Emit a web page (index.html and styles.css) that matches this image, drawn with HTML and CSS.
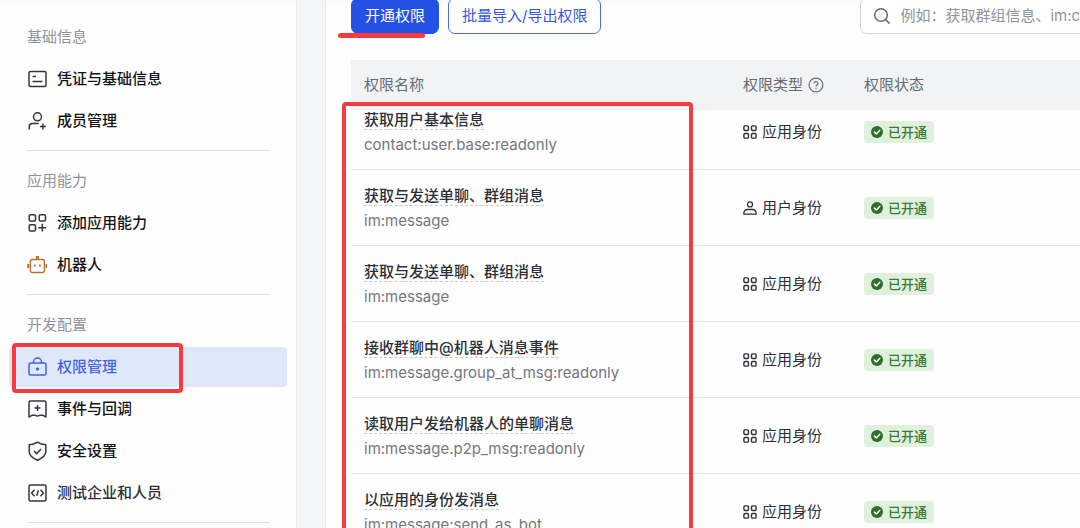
FILE: index.html
```html
<!DOCTYPE html>
<html lang="zh-CN">
<head>
<meta charset="utf-8">
<meta name="viewport" content="width=device-width, initial-scale=1">
<title>权限管理</title>
<link rel="stylesheet" href="styles.css">
</head>
<body>
<svg class="sprite" aria-hidden="true">
  <symbol id="i-grid" viewBox="0 0 14 14"><g fill="none" stroke="currentColor" stroke-width="1.4"><rect x=".9" y=".9" width="4.6" height="4.6" rx="1.2"/><rect x="8.5" y=".9" width="4.6" height="4.6" rx="1.2"/><rect x=".9" y="8.5" width="4.6" height="4.6" rx="1.2"/><rect x="8.5" y="8.5" width="4.6" height="4.6" rx="1.2"/></g></symbol>
  <symbol id="i-user" viewBox="0 0 14 14"><g fill="none" stroke="currentColor" stroke-width="1.3"><circle cx="7" cy="3.4" r="2.5"/><path d="M.9 13.2v-1.400a3.300 3.300 0 0 1 3.300-3.300h5.600a3.300 3.300 0 0 1 3.300 3.300v1.400z" stroke-linejoin="round"/></g></symbol>
  <symbol id="i-ok" viewBox="0 0 12 12"><circle cx="6" cy="6" r="6" fill="currentColor"/><path d="M3.4 6.1l1.9 1.8 3.4-3.5" fill="none" stroke="#fff" stroke-width="1.5" stroke-linecap="round" stroke-linejoin="round"/></symbol>
</svg>
<div class="app">
  <nav class="sidebar">
    <section class="group">
      <h2 class="group-title">基础信息</h2>
      <a class="item" href="#"><svg class="icon" viewBox="0 0 20 20"><rect x="2" y="2.5" width="17" height="15" rx="1.5"/><path d="M5.5 7.5h3.5M5.5 12.5h10"/></svg>凭证与基础信息</a>
      <a class="item" href="#"><svg class="icon" viewBox="0 0 20 20"><circle cx="10.5" cy="5.8" r="4"/><path d="M2.3 18.5v-3a3 3 0 0 1 3-3h6.4M15.9 12.5v6M12.9 15.5h6"/></svg>成员管理</a>
    </section>
    <section class="group">
      <h2 class="group-title">应用能力</h2>
      <a class="item" href="#"><svg class="icon" viewBox="0 0 20 20"><rect x="2.2" y="1.7" width="6.3" height="6.3" rx="1.3"/><rect x="12.2" y="1.7" width="6.3" height="6.3" rx="1.3"/><rect x="2.2" y="11.7" width="6.3" height="6.3" rx="1.3"/><path d="M15.3 10.8v7.8M11.4 14.7h7.8"/></svg>添加应用能力</a>
      <a class="item" href="#"><svg class="icon icon-bot" viewBox="0 0 20 20"><rect x="3.4" y="4.500" width="14" height="13" rx="1.7"/><path d="M10.4 1v3.400" stroke-width="3"/><path d="M1.200 9v4M19.600 9v4" stroke-width="2"/><path d="M7 10.500h1.800M12 10.500h1.800" stroke-width="1.800"/></svg>机器人</a>
    </section>
    <section class="group">
      <h2 class="group-title">开发配置</h2>
      <a class="item item-active" href="#" aria-current="page"><svg class="icon" viewBox="0 0 20 20"><rect x="2" y="6" width="17" height="12" rx="1.5"/><path d="M6.5 6V5a4 4 0 0 1 8 0v1"/><circle cx="10.5" cy="12" r="1.200" fill="currentColor" stroke-width="1"/></svg>权限管理<span class="mark mark-item"></span></a>
      <a class="item" href="#"><svg class="icon" viewBox="0 0 20 20"><path d="M2 18V3.500A1.500 1.500 0 0 1 3.500 2h14A1.500 1.500 0 0 1 19 3.500V18l-3.500-1.800H13l-2.500.9-2.500-.9H5.500z" stroke-linejoin="round"/><path d="M10.500 6v6M7.500 9h6"/></svg>事件与回调</a>
      <a class="item" href="#"><svg class="icon" viewBox="0 0 20 20"><path d="M10.500 1.200c2.500 1.700 5.200 2.400 8.300 2.500v7c0 4-3.800 6.500-8.300 8.500-4.500-2-8.300-4.500-8.300-8.500v-7c3.100-.1 5.800-.8 8.300-2.500z" stroke-linejoin="round"/><path d="M7 10l2.600 2.600 4.500-4.600"/></svg>安全设置</a>
      <a class="item item-plain" href="#"><svg class="icon" viewBox="0 0 20 20"><rect x="2" y="2" width="17" height="16" rx="1.500"/><path d="M7.500 6.800L4.600 10l2.900 3.200M13.500 6.800l2.900 3.200-2.900 3.200M11.400 7.300l-1.800 5.400"/></svg>测试企业和人员</a>
    </section>
  </nav>

  <main class="main">
    <div class="toolbar">
      <button class="btn btn-primary" type="button">开通权限<span class="mark-line"></span></button>
      <button class="btn btn-outline" type="button">批量导入/导出权限</button>
      <label class="search">
        <svg class="search-icon" viewBox="0 0 18 18"><circle cx="8" cy="8" r="6.300"/><path d="M12.600 12.600l4 4"/></svg>
        <input class="search-input" type="text" aria-label="搜索权限" placeholder="例如：获取群组信息、im:c">
      </label>
    </div>

    <div class="table-area">
      <table class="table">
        <colgroup><col class="col-name"><col class="col-type"><col></colgroup>
        <thead>
          <tr><th>权限名称</th><th><span class="type">权限类型<svg class="help" viewBox="0 0 16 16"><circle cx="8" cy="8" r="6.900"/><path d="M6 6.500a2 2 0 1 1 2.900 1.800c-.6.300-.9.600-.9 1.200"/><path d="M8 10.800v1.200"/></svg></span></th><th>权限状态</th></tr>
        </thead>
        <tbody>
          <tr><td><span class="name">获取用户基本信息</span><span class="code">contact:user.base:readonly</span></td><td><span class="type"><svg class="type-icon"><use href="#i-grid"/></svg>应用身份</span></td><td><span class="tag"><svg class="tag-icon"><use href="#i-ok"/></svg>已开通</span></td></tr>
          <tr><td><span class="name">获取与发送单聊、群组消息</span><span class="code">im:message</span></td><td><span class="type"><svg class="type-icon"><use href="#i-user"/></svg>用户身份</span></td><td><span class="tag"><svg class="tag-icon"><use href="#i-ok"/></svg>已开通</span></td></tr>
          <tr><td><span class="name">获取与发送单聊、群组消息</span><span class="code">im:message</span></td><td><span class="type"><svg class="type-icon"><use href="#i-grid"/></svg>应用身份</span></td><td><span class="tag"><svg class="tag-icon"><use href="#i-ok"/></svg>已开通</span></td></tr>
          <tr><td><span class="name">接收群聊中@机器人消息事件</span><span class="code">im:message.group_at_msg:readonly</span></td><td><span class="type"><svg class="type-icon"><use href="#i-grid"/></svg>应用身份</span></td><td><span class="tag"><svg class="tag-icon"><use href="#i-ok"/></svg>已开通</span></td></tr>
          <tr><td><span class="name">读取用户发给机器人的单聊消息</span><span class="code">im:message.p2p_msg:readonly</span></td><td><span class="type"><svg class="type-icon"><use href="#i-grid"/></svg>应用身份</span></td><td><span class="tag"><svg class="tag-icon"><use href="#i-ok"/></svg>已开通</span></td></tr>
          <tr><td><span class="name">以应用的身份发消息</span><span class="code">im:message:send_as_bot</span></td><td><span class="type"><svg class="type-icon"><use href="#i-grid"/></svg>应用身份</span></td><td><span class="tag"><svg class="tag-icon"><use href="#i-ok"/></svg>已开通</span></td></tr>
        </tbody>
      </table>
      <span class="mark mark-table"></span>
    </div>
  </main>
</div>
</body>
</html>
```

FILE: styles.css
```css
* { box-sizing: border-box; }

body {
  margin: 0;
  height: 100vh;
  overflow: hidden;
  font: 15px/24px Inter, "Noto Sans CJK SC", sans-serif;
  color: #2b2f36;
  background: #f4f5f7;
}

.sprite { position: absolute; width: 0; height: 0; }

.app { display: flex; gap: 28px; height: 100%; }

.sidebar,
.main {
  background: #fefefe linear-gradient(#f9f9fa, #fefefe) no-repeat 0 0 / 100% 5px;
  overflow: hidden;
}

/* Sidebar */
.sidebar {
  flex: none;
  width: 297px;
  padding: 25px 9px 0 9px;
  border-right: 1px solid #e9eaec;
}

.group { display: flex; flex-direction: column; gap: 2px; }

.group::after {
  content: "";
  height: 1px;
  margin: 7px 17px 18px 18px;
  background: #dee0e3;
}

.group-title {
  margin: 0 0 8px;
  padding-left: 18px;
  font-size: 15px;
  font-weight: 400;
  color: #8f9399;
}

.item {
  position: relative;
  display: flex;
  align-items: center;
  gap: 10px;
  height: 40px;
  padding-left: 18px;
  border-radius: 4px;
  font-weight: 500;
  color: #111317;
  text-decoration: none;
}

.item-plain { color: #2b2f36; }

.item-active { background: #dfe7fa; color: #4365e0; }

.icon {
  width: 20px;
  height: 20px;
  fill: none;
  stroke: #33373d;
  stroke-width: 1.5;
}

.icon-bot { stroke: #b9722f; }

.item-active .icon { color: #3f62e0; stroke: currentColor; }

/* Main */
.main {
  flex: 1;
  min-width: 0;
  padding-left: 25px;
  border-left: 1px solid #e9eaec;
}

.toolbar {
  display: flex;
  gap: 9px;
  margin: -2px -12px 26px 0;
}

.btn {
  position: relative;
  flex: none;
  height: 36px;
  padding: 0 13px;
  border: 1px solid #4a6be6;
  border-radius: 7px;
  font: inherit;
  color: #3558dc;
  background: #fff;
}

.btn-primary { border-color: #2450e4; background: #2450e4; color: #fff; }

.search {
  flex: 1;
  display: flex;
  align-items: center;
  gap: 9px;
  margin-left: 250px;
  padding-left: 12px;
  border: 1px solid #d4d6da;
  border-radius: 7px;
  background: #fff;
}

.search-icon {
  flex: none;
  width: 18px;
  height: 18px;
  fill: none;
  stroke: #646a73;
  stroke-width: 1.5;
}

.search-input {
  flex: 1;
  min-width: 0;
  padding: 0;
  border: 0;
  outline: 0;
  font: inherit;
  background: none;
}

.search-input::placeholder { color: #8f9399; opacity: 1; }

/* Table */
.table-area { position: relative; }

.table {
  width: 100%;
  table-layout: fixed;
  border-spacing: 0;
}

.col-name { width: 379px; }
.col-type { width: 121px; }

.table th {
  height: 50px;
  padding: 0 13px;
  background: #f2f3f5;
  font-weight: 400;
  text-align: left;
  color: #646a73;
}

.table td {
  padding: 26px 13px 0;
  border-bottom: 1px solid #e3e5e8;
  vertical-align: top;
}

.table td:first-child { padding: 16px 13px 12px; }

/* The first row is scrolled partly under the header */
.table tbody tr:first-child td { padding-top: 10px; }
.table tbody tr:first-child td:first-child { padding-top: 0; }

.name {
  display: block;
  width: fit-content;
  height: 20px;
  margin-bottom: 3px;
  border-bottom: 1px dashed #c6c9cd;
  line-height: 20px;
  font-weight: 500;
}

.code { display: block; color: #73777e; }

.type { display: flex; align-items: center; gap: 5px; }

.type-icon { width: 14px; height: 14px; }

.help {
  width: 16px;
  height: 16px;
  fill: none;
  stroke: currentColor;
  stroke-width: 1.2;
}

.tag {
  display: flex;
  align-items: center;
  gap: 5px;
  width: fit-content;
  height: 22px;
  margin-top: 1px;
  padding: 0 7px;
  border-radius: 4px;
  font-size: 13px;
  font-weight: 500;
  color: #3b7838;
  background: #dff1dd;
}

.tag-icon { width: 12px; height: 12px; color: #2f6d2c; }

/* Highlight marks */
.mark {
  position: absolute;
  border: 4px solid #f53b3e;
  border-radius: 4px;
  pointer-events: none;
}

.mark-item { left: 3px; top: -4px; width: 171px; height: 50px; }

.mark-table { left: -9px; top: 42px; width: 351px; height: 480px; }

.mark-line {
  position: absolute;
  left: -14px;
  top: 34px;
  width: 87px;
  height: 5px;
  border-radius: 3px;
  background: #f53b3e;
}
```
